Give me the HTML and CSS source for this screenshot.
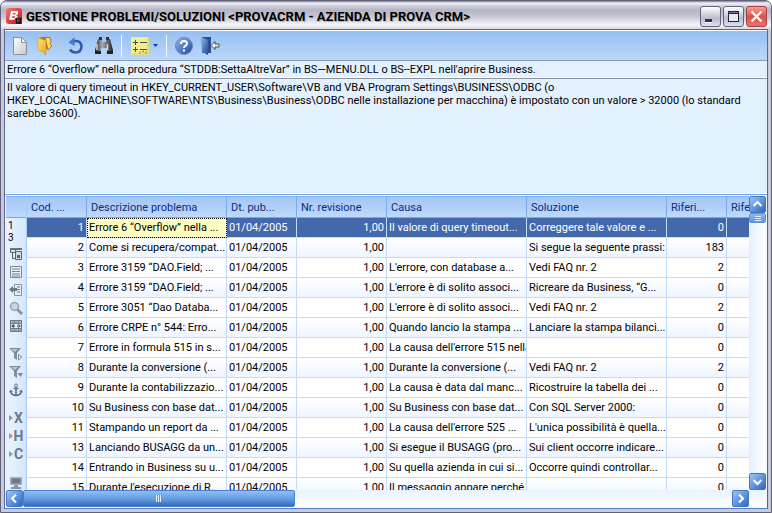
FILE: index.html
```html
<!DOCTYPE html>
<html lang="it">
<head>
<meta charset="utf-8">
<title>Gestione problemi/soluzioni</title>
<link rel="stylesheet" href="styles.css">
</head>
<body>
<svg class="defs" aria-hidden="true">
  <defs>
    <linearGradient id="gold" x1="0" x2="1" y2="1"><stop offset="0" stop-color="#ffe27a"/><stop offset="1" stop-color="#e9a91c"/></linearGradient>
    <linearGradient id="blue" x1="0" x2="1" y2="1"><stop offset="0" stop-color="#8db8f0"/><stop offset="1" stop-color="#1f4796"/></linearGradient>
    <linearGradient id="page" x1="0" x2="1" y2="1"><stop offset="0" stop-color="#ffffff"/><stop offset="1" stop-color="#c4c6cf"/></linearGradient>
    <linearGradient id="red" x1="0" x2="1" y2="1"><stop offset="0" stop-color="#f47a72"/><stop offset="1" stop-color="#c40f18"/></linearGradient>
    <linearGradient id="dark" x1="0" x2="1"><stop offset="0" stop-color="#222226"/><stop offset=".4" stop-color="#a9a9b0"/><stop offset="1" stop-color="#222226"/></linearGradient>
  </defs>
</svg>
<div class="window">
  <header class="titlebar">
    <svg class="logo" viewBox="0 0 17 17" aria-hidden="true">
      <rect x="0" y="0" width="16" height="16" rx="3" fill="url(#red)"/>
      <path d="M5 3h5q3 0 2 2.500q-.5 1.500-2 1.700q2 .5 1.300 2.600q-.8 2-3.300 2H3zM7 5l-.4 1.600h2q1 0 1-.8T9 5zM6.200 8.300L5.800 10h2.300q1 0 1.100-.9t-.9-.8z" fill="#fff" fill-rule="evenodd"/>
      <path d="M9 11.500l1.500-1v5M12 11.500q2.500-2 3 0q0 1.500-3 3.500h4" fill="none" stroke="#111" stroke-width="1.300"/>
    </svg>
    <h1>GESTIONE PROBLEMI/SOLUZIONI &lt;PROVACRM - AZIENDA DI PROVA CRM&gt;</h1>
    <div class="winbuttons">
      <button class="winbtn" aria-label="Riduci a icona"><svg viewBox="0 0 19 19"><path d="M4 13h7v3H4z" fill="#fff"/><path d="M4 12h7v3H4z" fill="#30304c"/></svg></button>
      <button class="winbtn" aria-label="Ingrandisci"><svg viewBox="0 0 19 19"><rect x="4.500" y="4.500" width="10" height="10" fill="#e8eaf2" stroke="#22223a"/><path d="M4 4h11v3H4z" fill="#22223a"/><path d="M5 5h9v1H5z" fill="#7a7a96"/></svg></button>
      <button class="winbtn close" aria-label="Chiudi"><svg viewBox="0 0 19 19"><path d="M4.500 4.500l10 10M14.500 4.500l-10 10" stroke="#fff" stroke-width="2.400"/></svg></button>
    </div>
  </header>
  <main class="client">
    <div class="toolbar" role="toolbar">
      <button class="tool" aria-label="Nuovo"><svg viewBox="0 0 20 20"><path d="M3.500 1.500h8l5 5v12h-13z" fill="url(#page)" stroke="#8a8fa3"/><path d="M11.500 1.500v5h5z" fill="#fff" stroke="#8a8fa3"/></svg></button>
      <button class="tool" aria-label="Apri"><svg viewBox="0 0 20 20"><path d="M3 2l3-1h5v12l-4 3z" fill="#b87a10"/><path d="M9 1.500h5l1 4-1 2.500 2 2-4 4z" fill="#ffd95a" stroke="#9c6410" stroke-width=".8"/><path d="M2 2l8 2.500V19l-2-1V16l-6-2z" fill="url(#gold)" stroke="#d29a20" stroke-width=".5"/></svg></button>
      <button class="tool gap-before" aria-label="Ripristina"><svg viewBox="0 0 20 20"><path d="M6 6Q14 3 15.500 9.500Q15.500 16.500 9.500 16.500Q6 16.500 4 13.500" fill="none" stroke="#2d5cac" stroke-width="2.500"/><path d="M2.500 6.500L8.500 1v9z" fill="#4478c4"/></svg></button>
      <button class="tool wide" aria-label="Trova"><svg viewBox="0 0 20 20"><path d="M4 3h4v3h4V3h4l3 11v4h-6v-6H7v6H1v-4z" fill="url(#dark)"/><path d="M5 1h3v3H5zM12 1h3v3h-3z" fill="#333"/><path d="M3 8v6M13.500 8v6" stroke="#d6d6dc" stroke-width="1.500"/><path d="M1 15h6v3H1zM13 15h6v3h-6z" fill="#222"/></svg></button>
      <span class="separator"></span>
      <button class="tool dropdown" aria-label="Strumenti"><svg viewBox="0 0 18 18"><rect width="18" height="18" rx="1" fill="#f5ec8c"/><path d="M1 17h16V1" fill="none" stroke="#d6c96a"/><path d="M2 5.500h5M4.500 3v5M9 5.500h7M2 12.500h5M4.500 10v5M9 12.500h7" stroke="#3d5268"/><path d="M8 15.500h2m1-1h2m1 1h2" stroke="#b5a55d" stroke-width="2"/></svg><svg class="caret" viewBox="0 0 5 3"><path d="M0 0h5L2.500 3z" fill="#123a94"/></svg></button>
      <span class="separator"></span>
      <button class="tool" aria-label="Guida"><svg viewBox="0 0 20 20"><circle cx="10" cy="10" r="8.500" fill="url(#blue)" stroke="#6b87bb"/><path d="M7 8q0-3 3-3t3 2.500q0 1.500-1.500 2.300T10 12" fill="none" stroke="#fff" stroke-width="2"/><path d="M9 13.500h2v2H9z" fill="#fff"/></svg></button>
      <button class="tool" aria-label="Esci"><svg viewBox="0 0 20 20"><path d="M2 1h9v16H2z" fill="#29518e"/><path d="M1 1l7 3v15l-6-3z" fill="url(#blue)"/><path d="M11 9.500l4-4v2.500h4v3h-4v2.500z" fill="#f0f0f4" stroke="#444a5c"/></svg></button>
    </div>
    <input class="problem" type="text" aria-label="Problema" value="Errore 6 “Overflow” nella procedura “STDDB:SettaAltreVar” in BS—MENU.DLL o BS--EXPL nell'aprire Business.">
    <textarea class="cause" aria-label="Causa">Il valore di query timeout in HKEY_CURRENT_USER\Software\VB and VBA Program Settings\BUSINESS\ODBC (o
HKEY_LOCAL_MACHINE\SOFTWARE\NTS\Business\Business\ODBC nelle installazione per macchina) è impostato con un valore &gt; 32000 (lo standard sarebbe 3600).</textarea>
    <section class="grid">
      <nav class="side">
        <div class="corner"></div>
        <div class="levels"><span>1</span><span>3</span></div>
        <div class="group">
          <button aria-label="Raggruppa"><svg viewBox="0 0 14 14"><path d="M1.500 1.500h5v4h-5zM3.500 6v5.500H6M6.500 4.500h6v8h-6z" fill="#d4dae4" stroke="#5b6472"/><path d="M1 1h12v2H1z" fill="#687280"/><path d="M8 8h3v3H8z" fill="#5b6472"/></svg></button>
          <button aria-label="Elenco"><svg viewBox="0 0 14 14"><path d="M1.500 1.500h11v11h-11z" fill="#e8edf4" stroke="#7c8798"/><path d="M3 4h8M3 6.500h8M3 9h8M3 11h8" stroke="#7c8798"/></svg></button>
          <button aria-label="Inserisci"><svg viewBox="0 0 14 14"><path d="M5.500 1.500h7v11h-7z" fill="#e8edf4" stroke="#8a94a5"/><path d="M8 4h3M8 6.500h3M8 9h3" stroke="#6b7688"/><path d="M0 6.500l4-3.500v2h4v3H4v2z" fill="#6b7688"/></svg></button>
          <button aria-label="Cerca"><svg viewBox="0 0 14 14"><path d="M8 8l5 5" stroke="#8e949f" stroke-width="3"/><circle cx="5.500" cy="5.500" r="4" fill="#ccd4df" stroke="#9aa3b1" stroke-width="1.500"/></svg></button>
          <button aria-label="Colonne"><svg viewBox="0 0 14 14"><path d="M1 1h12v12H1z" fill="#717b89"/><path d="M2 3h10M2 11h10" stroke="#dce2ea" stroke-dasharray="3 1"/><path d="M2 5h10v4H2z" fill="#e2e7ee"/><path d="M2 7l3-2v4zM12 7L9 5v4zM4 6.500h2v1H4zm4 0h2v1H8z" fill="#434c59"/></svg></button>
        </div>
        <div class="group">
          <button aria-label="Filtro"><svg viewBox="0 0 14 14"><path d="M0 1h12L8 6v7l-3-2V6z" fill="#808b9c"/><path d="M2 2h7L6 5z" fill="#bdc6d2"/><path d="M9.500 7.500l3.500 2.500-3.500 3z" fill="#e8eef6" stroke="#7d899c"/></svg></button>
          <button aria-label="Filtro avanzato"><svg viewBox="0 0 14 14"><path d="M0 1h12L8 6v7l-3-2V6z" fill="#808b9c"/><path d="M2 2h7L6 5z" fill="#bdc6d2"/><path d="M9 8h4.500v1L11.500 12 9 9z" fill="#7d899c"/></svg></button>
          <button aria-label="Ancora"><svg viewBox="0 0 14 14"><circle cx="7" cy="2.500" r="1.500" fill="none" stroke="#67758a"/><path d="M7 4v8M4.500 5.500h5M1.500 8q1 4.500 5.500 4.500T12.500 8" fill="none" stroke="#67758a" stroke-width="1.700"/><path d="M0 9.500l1.500-3 2.500 2zM14 9.500l-1.500-3-2.500 2z" fill="#67758a"/></svg></button>
        </div>
        <div class="group letters">
          <button><i></i>X</button>
          <button><i></i>H</button>
          <button><i></i>C</button>
        </div>
        <div class="group">
          <button aria-label="Schermo"><svg viewBox="0 0 14 14"><path d="M1.500 2.500h11v7h-11z" fill="#8993a3" stroke="#a6afbd"/><path d="M3 4h8v4H3z" fill="#6e7888"/><path d="M5 11h4M2 13h10" stroke="#8993a3" stroke-width="2"/></svg></button>
        </div>
      </nav>
      <div class="tablebox">
        <table>
          <colgroup><col class="w60"><col class="w140"><col class="w70"><col class="w90"><col class="w140"><col class="w140"><col class="w60"><col></colgroup>
          <thead><tr><th>Cod. ...</th><th>Descrizione problema</th><th>Dt. pub...</th><th>Nr. revisione</th><th>Causa</th><th>Soluzione</th><th>Riferi...</th><th class="last">Rife</th></tr></thead>
          <tbody>
            <tr class="selected"><td>1</td><td class="focus">Errore 6 “Overflow” nella ...</td><td>01/04/2005</td><td>1,00</td><td>Il valore di query timeout...</td><td>Correggere tale valore e ...</td><td>0</td><td></td></tr>
            <tr><td>2</td><td>Come si recupera/compat...</td><td>01/04/2005</td><td>1,00</td><td></td><td>Si segue la seguente prassi:</td><td>183</td><td></td></tr>
            <tr><td>3</td><td>Errore 3159 “DAO.Field; ...</td><td>01/04/2005</td><td>1,00</td><td>L'errore, con database a...</td><td>Vedi FAQ nr. 2</td><td>2</td><td></td></tr>
            <tr><td>4</td><td>Errore 3159 “DAO.Field; ...</td><td>01/04/2005</td><td>1,00</td><td>L'errore è di solito associ...</td><td>Ricreare da Business, “G...</td><td>0</td><td></td></tr>
            <tr><td>5</td><td>Errore 3051 “Dao Databa...</td><td>01/04/2005</td><td>1,00</td><td>L'errore è di solito associ...</td><td>Vedi FAQ nr. 2</td><td>2</td><td></td></tr>
            <tr><td>6</td><td>Errore CRPE n° 544: Erro...</td><td>01/04/2005</td><td>1,00</td><td>Quando lancio la stampa ...</td><td>Lanciare la stampa bilanci...</td><td>0</td><td></td></tr>
            <tr><td>7</td><td>Errore in formula 515 in s...</td><td>01/04/2005</td><td>1,00</td><td>La causa dell'errore 515 nella</td><td></td><td>0</td><td></td></tr>
            <tr><td>8</td><td>Durante la conversione (...</td><td>01/04/2005</td><td>1,00</td><td>Durante la conversione (...</td><td>Vedi FAQ nr. 2</td><td>2</td><td></td></tr>
            <tr><td>9</td><td>Durante la contabilizzazio...</td><td>01/04/2005</td><td>1,00</td><td>La causa è data dal manc...</td><td>Ricostruire la tabella dei ...</td><td>0</td><td></td></tr>
            <tr><td>10</td><td>Su Business con base dat...</td><td>01/04/2005</td><td>1,00</td><td>Su Business con base dat...</td><td>Con SQL Server 2000:</td><td>0</td><td></td></tr>
            <tr><td>11</td><td>Stampando un report da ...</td><td>01/04/2005</td><td>1,00</td><td>La causa dell'errore 525 ...</td><td>L'unica possibilità è quella...</td><td>0</td><td></td></tr>
            <tr><td>13</td><td>Lanciando BUSAGG da un...</td><td>01/04/2005</td><td>1,00</td><td>Si esegue il BUSAGG (pro...</td><td>Sui client occorre indicare...</td><td>0</td><td></td></tr>
            <tr><td>14</td><td>Entrando in Business su u...</td><td>01/04/2005</td><td>1,00</td><td>Su quella azienda in cui si...</td><td>Occorre quindi controllar...</td><td>0</td><td></td></tr>
            <tr><td>15</td><td>Durante l'esecuzione di R...</td><td>01/04/2005</td><td>1,00</td><td>Il messaggio appare perché</td><td></td><td>0</td><td></td></tr>
          </tbody>
        </table>
      </div>
      <div class="vscroll">
        <button class="arrow" aria-label="Su"><svg viewBox="0 0 17 17"><path d="M4.500 10l4-4 4 4" fill="none" stroke="#fff" stroke-width="2"/></svg></button>
        <div class="vthumb"></div>
        <button class="arrow end" aria-label="Giù"><svg viewBox="0 0 17 17"><path d="M4.500 7l4 4 4-4" fill="none" stroke="#fff" stroke-width="2"/></svg></button>
      </div>
      <div class="hscroll">
        <button class="arrow" aria-label="Sinistra"><svg viewBox="0 0 17 17"><path d="M10 4.500l-4 4 4 4" fill="none" stroke="#fff" stroke-width="2"/></svg></button>
        <div class="hthumb"></div>
        <button class="arrow end" aria-label="Destra"><svg viewBox="0 0 17 17"><path d="M7 4.500l4 4-4 4" fill="none" stroke="#fff" stroke-width="2"/></svg></button>
      </div>
    </section>
  </main>
</div>
</body>
</html>
```
FILE: styles.css
```css
* { box-sizing: border-box; }

body {
  margin: 0;
  background: #fff;
  color: #000;
  font: 11px/13px Roboto, sans-serif;
}

button {
  display: flex;
  align-items: center;
  justify-content: center;
  padding: 0;
  border: 0;
  background: none;
  font: inherit;
}

svg { display: block; flex: none; }
.defs { position: absolute; width: 0; height: 0; }

.window {
  display: flex;
  flex-direction: column;
  height: 100vh;
  padding: 0 3px 3px;
  border: 1px solid #60607a;
  border-radius: 7px 7px 0 0;
  background: #c9c9d8;
  overflow: hidden;
}

.titlebar {
  display: flex;
  flex: none;
  align-items: center;
  gap: 3px;
  height: 28px;
  margin: 0 -3px;
  padding: 3px 4px 0 5px;
  background: linear-gradient(#77778c, #f4f4fa 2px, #d0d0dc 5px, #b4b4c4 9px, #c8c8d4 16px, #f6f6fa 24px, #d8d8e2);
}

.logo { width: 17px; height: 17px; }

h1 {
  flex: 1;
  margin: 0;
  overflow: hidden;
  white-space: nowrap;
  font: bold 13px/18px Roboto, sans-serif;
  text-shadow: 1px 1px 0 #b4b4be;
}

.winbuttons { display: flex; gap: 2px; }

.winbtn {
  width: 21px;
  height: 21px;
  border: 1px solid #62647f;
  border-radius: 3px;
  background: linear-gradient(#fff, #b8bccb 60%, #dfe2ee);
}

.winbtn svg { width: 19px; height: 19px; }

.close {
  border-color: #a8404a;
  background: linear-gradient(#f6a08c, #dc5148 50%, #e8736c);
}

.client {
  display: flex;
  flex: 1;
  flex-direction: column;
  min-height: 0;
  border: 1px solid #5c6688;
  border-bottom-color: #4f84cc;
  background: #e3f1ff;
}

.toolbar {
  display: flex;
  flex: none;
  align-items: center;
  gap: 6px;
  height: 31px;
  padding: 0 5px;
  border-top: 1px solid #fff;
  border-bottom: 1px solid #8a9cbc;
  background: linear-gradient(#96bff2, #bcd7fa);
}

.tool { width: 20px; height: 20px; }
.tool svg { width: 20px; height: 20px; }
.gap-before { margin-left: 4px; }
.wide { margin-left: 2px; }

.dropdown { width: 30px; gap: 4px; }
.dropdown svg { width: 18px; height: 18px; }
.dropdown .caret { width: 5px; height: 3px; }

.separator {
  width: 1px;
  height: 22px;
  margin: 0 1px;
  background: #f4f9ff;
}

.problem, .cause {
  display: block;
  width: 100%;
  margin: 0;
  padding: 0 2px;
  border: 0;
  border-radius: 0;
  outline: 0;
  background: #e3f1ff;
  color: #000;
  font: inherit;
}

.problem { flex: none; height: 17px; border-bottom: 1px solid #fff; }

.cause {
  flex: none;
  height: 116px;
  padding-top: 2px;
  border-top: 1px solid #8c919c;
  border-bottom: 1px solid #fff;
  resize: none;
  white-space: pre-wrap;
  overflow: hidden;
}

.grid {
  display: grid;
  flex: 1;
  grid-template: minmax(0, 1fr) 17px / 21px minmax(0, 1fr) 17px;
  min-height: 0;
  border-top: 1px solid #6fa5ea;
  padding: 1px;
  background: #eef5ff;
}

.side {
  overflow: hidden;
  border-right: 1px solid #a9ccf6;
  background: linear-gradient(90deg, #eaf4ff, #d3e6fc);
}

.corner, th {
  height: 22px;
  border-top: 1px solid #86b1ea;
  border-bottom: 1px solid #78a8e8;
  background: linear-gradient(#a3c6f4, #bed9fb);
}

.levels {
  display: flex;
  flex-direction: column;
  height: 27px;
  padding: 2px 0 0 2px;
  font-size: 10px;
  line-height: 12px;
}

.group { margin-bottom: 10px; }
.side button { width: 20px; height: 18px; }
.side svg { width: 14px; height: 14px; }

.letters button {
  gap: 1px;
  color: #6a7890;
  font: bold 14px/18px Roboto, sans-serif;
}

.letters i {
  border: 3px solid transparent;
  border-right: 0;
  border-left: 4px solid #8d99ad;
}

.tablebox { overflow: hidden; background: #fff; }

table {
  width: 100%;
  border-collapse: separate;
  border-spacing: 0;
  table-layout: fixed;
}

.w60 { width: 60px; }
.w70 { width: 70px; }
.w90 { width: 90px; }
.w140 { width: 140px; }

th, td {
  overflow: hidden;
  white-space: nowrap;
  text-align: left;
  border-right: 1px solid #c3dcfa;
}

th {
  padding: 0 4px;
  border-right-color: #7cabea;
  color: #0c2a86;
  font-weight: normal;
}

.last { padding-right: 0; border-right: 0; }

td {
  height: 20px;
  padding: 0 2px;
  border-bottom: 1px solid #c3dcfa;
}

td:last-child { border-right: 0; }

td:nth-child(1), td:nth-child(4), td:nth-child(7) { text-align: right; }
tbody tr:nth-child(even) td { background: linear-gradient(#fff, #eef5ff); }

.selected td { background: #4468ac; color: #fff; }

.selected .focus {
  outline: 1px dotted #000;
  outline-offset: -1px;
  background: #ffffc4;
  color: #000;
}

.vscroll {
  display: flex;
  flex-direction: column;
  background: linear-gradient(90deg, #e4efff, #fff);
}

.hscroll {
  display: flex;
  grid-column: 1 / -1;
  padding-right: 17px;
  background: linear-gradient(#e8f2ff, #fff);
}

.arrow {
  flex: none;
  width: 17px;
  height: 17px;
  border: 1px solid #4677c4;
  border-radius: 2px;
  background: linear-gradient(135deg, #9cc5f7, #2f66bd);
}

.arrow svg { width: 17px; height: 17px; }
.end { margin-top: auto; margin-left: auto; }

.vthumb {
  height: 10px;
  border: 1px solid #5c92dc;
  border-radius: 2px;
  background: repeating-linear-gradient(#e6f1ff 0 1px, #5d92dc 1px 2px) center / 6px 5px no-repeat, linear-gradient(#8ab8f2, #6198e0);
}

.hthumb {
  width: 272px;
  border: 1px solid #4a7fce;
  border-radius: 2px;
  background: repeating-linear-gradient(90deg, #e6f1ff 0 1px, #5d92dc 1px 2px) center / 6px 7px no-repeat, linear-gradient(#8fbff6, #5e96de 60%, #3566b4);
}
```
